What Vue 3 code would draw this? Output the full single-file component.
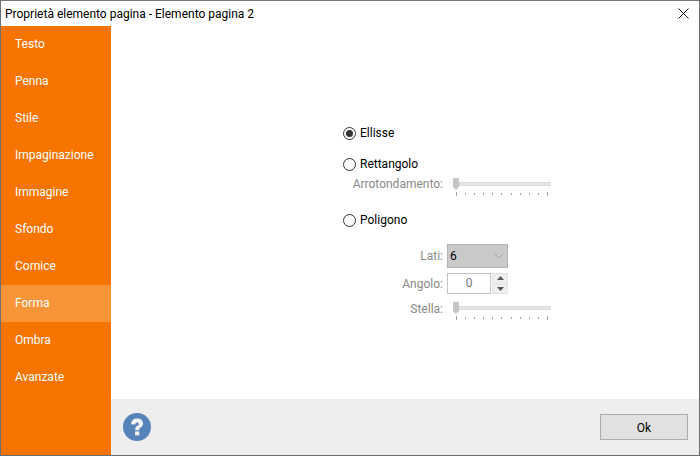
<script setup>
const items = ['Testo','Penna','Stile','Impaginazione','Immagine','Sfondo','Cornice','Forma','Ombra','Avanzate']
const ticks = Array.from({ length: 11 })
</script>

<template>
  <div class="window">
    <header class="titlebar">
      <span class="title">Proprietà elemento pagina - Elemento pagina 2</span>
      <svg class="close" width="11" height="11" viewBox="0 0 11 11"><path d="M0.5 0.5L10.5 10.5M10.5 0.5L0.5 10.5" stroke="#111" stroke-width="1" fill="none"/></svg>
    </header>
    <div class="body">
      <nav class="side">
        <div v-for="i in items" :key="i" class="item" :class="{ active: i === 'Forma' }">{{ i }}</div>
      </nav>
      <div class="main">
        <section class="content">
          <div class="row r-ellisse"><span class="radio on"></span><span class="lab">Ellisse</span></div>
          <div class="row r-rett"><span class="radio"></span><span class="lab">Rettangolo</span></div>
          <div class="sub r-arr">
            <span class="dim">Arrotondamento:</span>
            <div class="slider">
              <div class="track"></div><div class="thumb"></div>
              <div class="ticks"><i v-for="(t, n) in ticks" :key="n"></i></div>
            </div>
          </div>
          <div class="row r-pol"><span class="radio"></span><span class="lab">Poligono</span></div>
          <div class="sub r-lati">
            <span class="dim">Lati:</span>
            <div class="select"><span>6</span>
              <svg width="10" height="6" viewBox="0 0 10 6"><path d="M0.5 0.5L5 5L9.5 0.5" stroke="#a9a9a9" fill="none"/></svg>
            </div>
          </div>
          <div class="sub r-ang">
            <span class="dim">Angolo:</span>
            <div class="input">0</div>
            <div class="spin">
              <div class="sb"><svg width="7" height="4" viewBox="0 0 7 4"><path d="M3.5 0L7 4H0Z" fill="#555"/></svg></div>
              <div class="sb"><svg width="7" height="4" viewBox="0 0 7 4"><path d="M0 0H7L3.5 4Z" fill="#555"/></svg></div>
            </div>
          </div>
          <div class="sub r-stella">
            <span class="dim">Stella:</span>
            <div class="slider">
              <div class="track"></div><div class="thumb"></div>
              <div class="ticks"><i v-for="(t, n) in ticks" :key="n"></i></div>
            </div>
          </div>
        </section>
        <footer class="footer">
          <svg class="help" width="28" height="28" viewBox="0 0 28 28">
            <circle cx="14" cy="14" r="14" fill="#5783bb"/>
            <path d="M8.2 11.2C8.2 7.6 10.8 5.6 14.2 5.6C17.7 5.6 20 7.6 20 10.6C20 12.9 18.7 13.9 17.4 14.8C16.4 15.5 16.2 16 16.2 17.2H12.2C12.2 15 12.7 13.9 14.3 12.8C15.3 12.1 15.9 11.7 15.9 10.9C15.9 10 15.2 9.4 14.1 9.4C12.9 9.4 12.3 10.2 12.2 11.4Z" fill="#f2f2f2"/>
            <rect x="12.1" y="18.4" width="4.2" height="4" fill="#f2f2f2"/>
          </svg>
          <button class="ok">Ok</button>
        </footer>
      </div>
    </div>
  </div>
</template>

<style>
html, body { margin: 0; background: #fff; }
</style>

<style scoped>
.window { width: 700px; height: 456px; box-sizing: border-box; border: 1px solid #6f6f6f; border-top-color: #777; background: #fff; display: flex; flex-direction: column; overflow: hidden; font-family: Roboto, "Open Sans", sans-serif; font-size: 12px; color: #000; }
.titlebar { height: 25px; flex: none; display: flex; align-items: center; justify-content: space-between; padding: 0 10px 0 4px; }
.body { flex: 1; display: flex; min-height: 0; }
.side { width: 110px; flex: none; background: #f77400; }
.item { height: 37px; line-height: 36px; padding-left: 14px; color: #fff; }
.item.active { background: #f99439; }
.main { flex: 1; display: flex; flex-direction: column; min-width: 0; }
.content { flex: 1; padding-top: 97px; box-sizing: border-box; padding-left: 232px; }
.row { display: flex; align-items: center; height: 20px; }
.radio { width: 11px; height: 11px; border: 1px solid #333; border-radius: 50%; background: #fff; position: relative; margin-right: 4px; flex: none; }
.radio.on::after { content: ""; position: absolute; left: 2px; top: 2px; width: 7px; height: 7px; border-radius: 50%; background: #333; }
.lab { line-height: 20px; }
.sub { display: flex; align-items: center; }
.dim { width: 100px; text-align: right; color: #8a8a8a; flex: none; white-space: nowrap; }
.r-ellisse { margin-bottom: 11px; }
.r-arr { height: 20px; margin-bottom: 16px; }
.r-pol { margin-bottom: 14px; }
.r-lati { height: 24px; margin-bottom: 5px; }
.r-ang { height: 21px; margin-bottom: 4px; }
.r-stella { height: 20px; }
.r-stella .dim { padding-top: 2px; }
.slider { position: relative; width: 99px; height: 20px; margin-left: 9px; }
.track { position: absolute; left: 7px; right: 0; top: 8px; background: #e3e6e3; border: 1px solid #dcdcdc; height: 2px; }
.thumb { position: absolute; left: 1px; top: 4px; width: 6px; height: 9px; background: #c6c6c6; }
.thumb::after { content: ""; position: absolute; left: 0; top: 9px; border-left: 3px solid transparent; border-right: 3px solid transparent; border-top: 3px solid #c6c6c6; }
.ticks { position: absolute; left: 4px; width: 92px; top: 19px; display: flex; justify-content: space-between; }
.ticks i { width: 1px; height: 2px; background: #a0a0a0; display: block; }
.ticks i:first-child, .ticks i:last-child { height: 4px; margin-top: -1px; }
.select { width: 61px; height: 24px; box-sizing: border-box; margin-left: 4px; background: #c9c9c9; border: 1px solid #b5b5b5; display: flex; align-items: center; justify-content: space-between; padding: 0 3px 0 2px; }
.input { width: 44px; height: 21px; box-sizing: border-box; margin-left: 4px; border: 1px solid #c4c4c4; text-align: center; line-height: 19px; color: #777; }
.spin { display: flex; flex-direction: column; width: 16px; height: 21px; margin-left: 1px; gap: 1px; background: #f0f0f0; }
.sb { flex: 1; background: #efefef; border: 1px solid #e4e4e4; display: flex; align-items: center; justify-content: center; }
.footer { height: 56px; flex: none; background: #eeeeee; display: flex; align-items: center; justify-content: space-between; padding: 0 11px 0 12px; }
.help { display: block; }
.ok { width: 88px; height: 26px; box-sizing: border-box; background: #e1e1e1; border: 1px solid #adadad; font: inherit; color: #000; padding: 2px 0 0; }
</style>
